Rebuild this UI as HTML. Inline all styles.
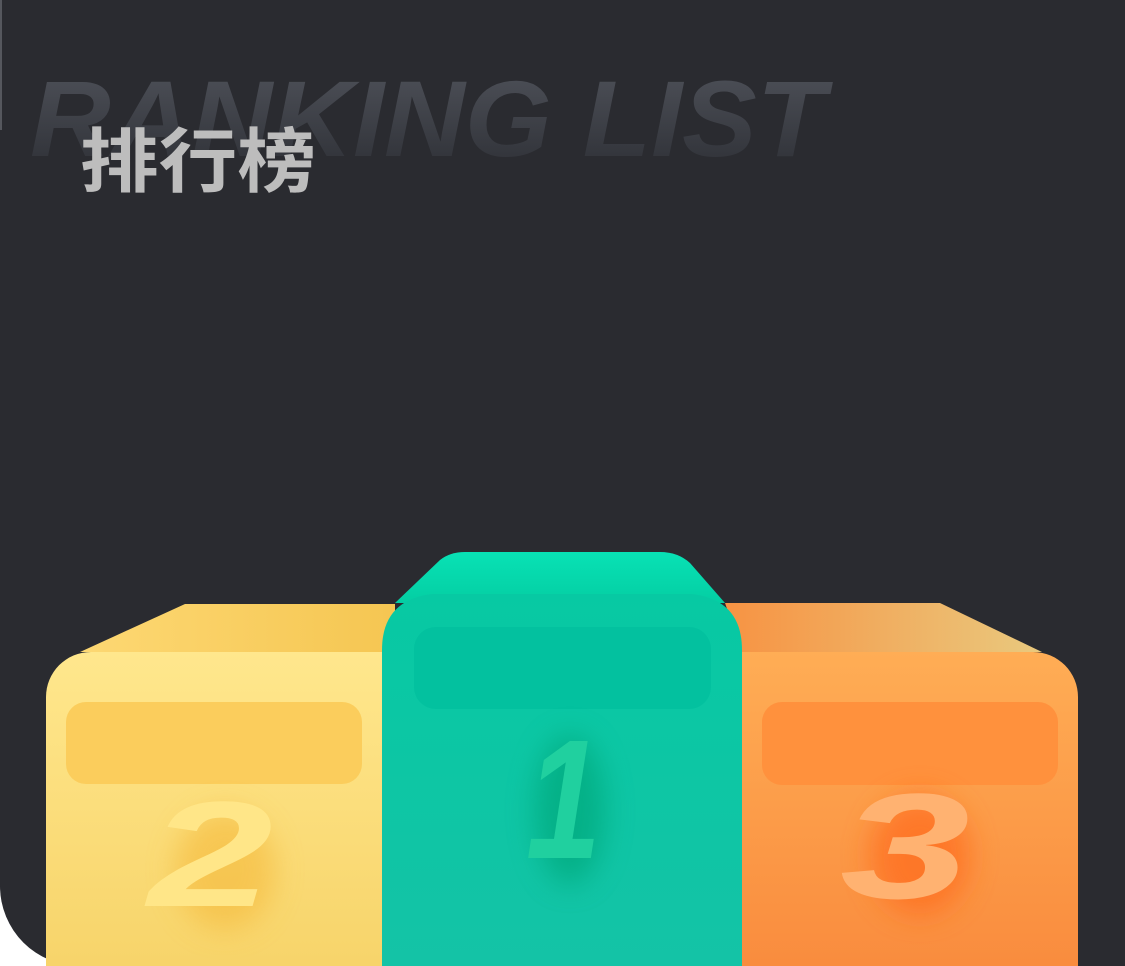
<!DOCTYPE html>
<html><head><meta charset="utf-8"><style>
html,body{margin:0;padding:0;background:#fff;}
body{width:1125px;height:966px;overflow:hidden;position:relative;}
</style></head><body>
<svg width="1125" height="966" viewBox="0 0 1125 966" xmlns="http://www.w3.org/2000/svg" style="position:absolute;left:0;top:0">
<defs>
<linearGradient id="tg" x1="0" y1="0" x2="0" y2="1">
<stop offset="0" stop-color="#50535b"/><stop offset="1" stop-color="#2d2f35"/></linearGradient>
<linearGradient id="yf" x1="0" y1="0" x2="0" y2="1">
<stop offset="0" stop-color="#ffe78d"/><stop offset="1" stop-color="#f7d46a"/></linearGradient>
<linearGradient id="yt" x1="0" y1="0" x2="1" y2="0">
<stop offset="0" stop-color="#fdd873"/><stop offset="1" stop-color="#f5c652"/></linearGradient>
<linearGradient id="gf" x1="0" y1="0" x2="0" y2="1">
<stop offset="0" stop-color="#07c9a3"/><stop offset="1" stop-color="#14c3a6"/></linearGradient>
<linearGradient id="gt" x1="0" y1="0" x2="0" y2="1">
<stop offset="0" stop-color="#08e2b5"/><stop offset="1" stop-color="#04cea3"/></linearGradient>
<linearGradient id="of" x1="0" y1="0" x2="0" y2="1">
<stop offset="0" stop-color="#ffad55"/><stop offset="1" stop-color="#f98c3e"/></linearGradient>
<linearGradient id="ot" x1="0" y1="0" x2="1" y2="0">
<stop offset="0" stop-color="#f79343"/><stop offset="1" stop-color="#e9c97e"/></linearGradient>
<filter id="bl" x="-50%" y="-50%" width="200%" height="200%"><feGaussianBlur stdDeviation="14"/></filter>
</defs>
<path d="M0 0H1125V966H80A80 80 0 0 1 0 886Z" fill="#2a2b30"/>
<rect x="0" y="0" width="2" height="130" fill="#55575d"/>
<text x="30" y="156" font-family="Liberation Sans, sans-serif" font-weight="bold" font-style="italic" font-size="108" fill="url(#tg)" textLength="795" lengthAdjust="spacingAndGlyphs">RANKING LIST</text>
<text x="80" y="186" font-family="Liberation Sans, 'Noto Sans CJK SC', sans-serif" font-weight="bold" font-size="70" fill="#bdbdbd" textLength="236" lengthAdjust="spacingAndGlyphs">排行榜</text>
<!-- yellow -->
<path d="M80 652L185 604H395V652Z" fill="url(#yt)"/>
<path d="M46 966V697A45 45 0 0 1 91 652H390V966Z" fill="url(#yf)"/>
<rect x="66" y="702" width="296" height="82" rx="20" fill="#fbcd5c"/>
<ellipse cx="225" cy="870" rx="50" ry="60" fill="#f5b93a" opacity="0.6" filter="url(#bl)"/>
<text x="148" y="906" font-family="Liberation Sans, sans-serif" font-weight="bold" font-style="italic" font-size="150" fill="#ffe688" textLength="125" lengthAdjust="spacingAndGlyphs">2</text>
<!-- orange -->
<path d="M725 603H940L1042 652H742Z" fill="url(#ot)"/>
<path d="M738 652H1033A45 45 0 0 1 1078 697V966H738Z" fill="url(#of)"/>
<rect x="762" y="702" width="296" height="83" rx="20" fill="#ff913d"/>
<ellipse cx="920" cy="855" rx="50" ry="60" fill="#ff6a1a" opacity="0.7" filter="url(#bl)"/>
<text x="840" y="898" font-family="Liberation Sans, sans-serif" font-weight="bold" font-style="italic" font-size="150" fill="#ffb271" textLength="130" lengthAdjust="spacingAndGlyphs">3</text>
<!-- green -->
<path d="M395 603L440 560Q450 552 465 552H660Q678 552 690 563L725 603Z" fill="url(#gt)"/>
<path d="M382 966V650Q382 600 432 594H692Q742 600 742 650V966Z" fill="url(#gf)"/>
<rect x="414" y="627" width="297" height="82" rx="22" fill="#03c19f"/>
<ellipse cx="570" cy="810" rx="35" ry="75" fill="#01a77a" opacity="0.7" filter="url(#bl)"/>
<text x="526" y="858" font-family="Liberation Sans, sans-serif" font-weight="bold" font-style="italic" font-size="170" fill="#20d09f" textLength="75" lengthAdjust="spacingAndGlyphs">1</text>
</svg>
</body></html>
